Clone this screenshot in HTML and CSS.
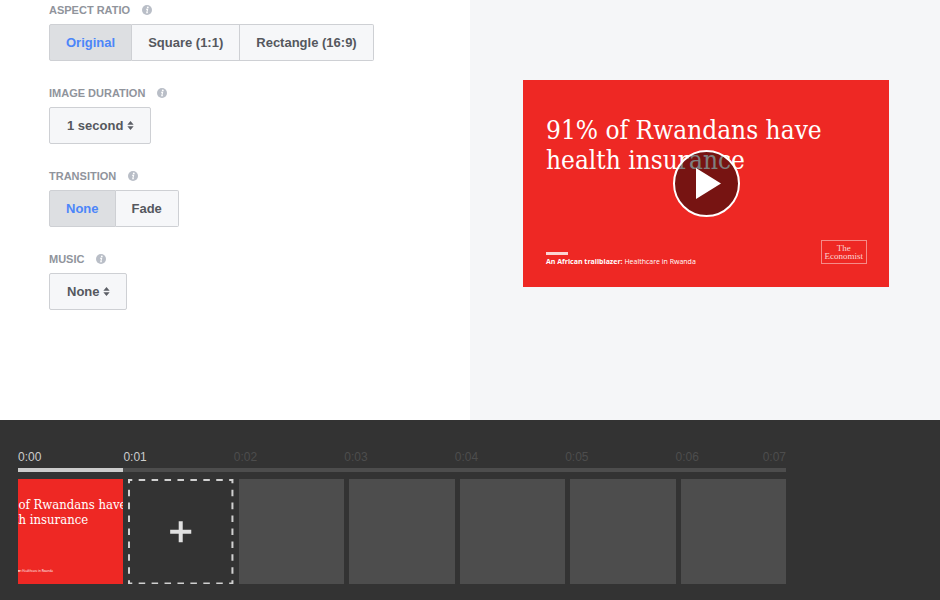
FILE: index.html
```html
<!DOCTYPE html>
<html lang="en">
<head>
<meta charset="utf-8">
<title>Slideshow editor</title>
<link rel="stylesheet" href="styles.css">
</head>
<body>
<svg class="defs" aria-hidden="true">
  <symbol id="info" viewBox="0 0 10 10"><circle cx="5" cy="5" r="5" fill="#b9bec7"/><circle cx="5.8" cy="2.4" r=".9" fill="#fff"/><path d="M4 4.300h1.600L4.800 7.600h1" fill="none" stroke="#fff" stroke-width="1.1"/></symbol>
  <symbol id="sort" viewBox="0 0 7 10"><path d="M3.500 0 7 4.300H0zM0 5.700h7L3.500 10z" fill="#5c5f66"/></symbol>
</svg>
<main class="editor">
  <form class="settings">
    <div class="field" role="group" aria-labelledby="l-ratio">
      <div class="label"><span id="l-ratio">ASPECT RATIO</span><svg class="info"><use href="#info"/></svg></div>
      <div class="segments">
        <button type="button" class="segment selected">Original</button>
        <button type="button" class="segment">Square (1:1)</button>
        <button type="button" class="segment">Rectangle (16:9)</button>
      </div>
    </div>
    <div class="field">
      <div class="label"><label for="duration">IMAGE DURATION</label><svg class="info"><use href="#info"/></svg></div>
      <div class="picker"><select id="duration"><option>1 second</option></select><svg class="sort"><use href="#sort"/></svg></div>
    </div>
    <div class="field" role="group" aria-labelledby="l-trans">
      <div class="label"><span id="l-trans">TRANSITION</span><svg class="info"><use href="#info"/></svg></div>
      <div class="segments">
        <button type="button" class="segment selected">None</button>
        <button type="button" class="segment">Fade</button>
      </div>
    </div>
    <div class="field">
      <div class="label"><label for="music">MUSIC</label><svg class="info"><use href="#info"/></svg></div>
      <div class="picker"><select id="music"><option>None</option></select><svg class="sort"><use href="#sort"/></svg></div>
    </div>
  </form>
  <section class="preview">
    <div class="slide">
      <div class="headline">91% of Rwandans have<br>health insurance</div>
      <div class="slide-foot">
        <div class="caption"><b>An African trailblazer:</b> Healthcare in Rwanda</div>
        <div class="logo"><div>The</div><div>Economist</div></div>
      </div>
      <button type="button" class="play" aria-label="Play"><svg viewBox="0 0 63 63"><path d="M21 16v31l25-15.500z" fill="#fff"/></svg></button>
    </div>
  </section>
</main>
<section class="timeline">
  <div class="track times">
    <div class="time on">0:00</div>
    <div class="time on">0:01</div>
    <div class="time">0:02</div>
    <div class="time">0:03</div>
    <div class="time">0:04</div>
    <div class="time">0:05</div>
    <div class="time">0:06<span>0:07</span></div>
  </div>
  <div class="track bar"><div class="filled"></div></div>
  <div class="track">
    <div class="tile thumb">
      <div class="mini">
        <div class="mini-headline">91% of Rwandans have<br>health insurance</div>
        <div class="mini-caption"><b>An African trailblazer:</b> Healthcare in Rwanda</div>
      </div>
    </div>
    <button type="button" class="tile add" aria-label="Add image">
      <svg viewBox="0 0 105 105" fill="none">
        <rect x="1" y="1" width="103" height="103" stroke="#d0d0d0" stroke-width="2" stroke-dasharray="6.500 6.375" stroke-dashoffset="3.250"/>
        <path d="M52.500 42v21M42 52.500h21" stroke="#e0e0e0" stroke-width="4"/>
      </svg>
    </button>
    <div class="tile"></div>
    <div class="tile"></div>
    <div class="tile"></div>
    <div class="tile"></div>
    <div class="tile"></div>
  </div>
</section>
</body>
</html>
```
FILE: styles.css
```css
* { box-sizing: border-box; }
body {
  margin: 0;
  min-height: 100vh;
  display: grid;
  grid-template-rows: 1fr auto;
  font-family: "Liberation Sans", Arial, sans-serif;
  background: #fff;
}
.defs { position: absolute; width: 0; height: 0; }
button, select { font: inherit; margin: 0; }

.editor { display: grid; grid-template-columns: 1fr 1fr; }
.settings {
  display: flex;
  flex-direction: column;
  gap: 24px;
  padding: 2px 49px 24px;
}
.field { display: flex; flex-direction: column; align-items: flex-start; gap: 6px; }
.label {
  display: flex;
  align-items: center;
  gap: 12px;
  font-size: 11px;
  font-weight: bold;
  line-height: 16px;
  color: #90949c;
}
.info { width: 10px; height: 10px; }
.segments { display: flex; }
.segment, .picker select {
  height: 37px;
  padding: 0 16px;
  border: 1px solid #ced0d4;
  background: #f6f7f9;
  color: #55585e;
  font-size: 13px;
  font-weight: bold;
  white-space: nowrap;
}
.segment { border-left-width: 0; }
.segment:first-child { border-left-width: 1px; border-radius: 2px 0 0 2px; }
.segment:last-child { border-radius: 0 2px 2px 0; }
.segment.selected { background: #dddfe2; color: #4c86f9; }
.picker { position: relative; }
.picker select { appearance: none; display: block; border-radius: 2px; padding: 0 26px 0 17px; }
.sort {
  position: absolute;
  right: 17px;
  top: 14px;
  width: 7px;
  height: 9px;
  pointer-events: none;
}

.preview { background: #f5f6f8; padding: 80px 51px 24px 53px; }
.slide {
  position: relative;
  aspect-ratio: 366 / 207;
  display: flex;
  flex-direction: column;
  justify-content: space-between;
  padding: 35px 22px 20px 23px;
  background: #ee2824;
  color: #fff;
}
.headline {
  font: 26px/30px "DejaVu Serif Condensed", "DejaVu Serif", serif;
  white-space: nowrap;
}
.slide-foot { display: flex; justify-content: space-between; align-items: flex-end; }
.caption { font: 7px/10px "Open Sans", sans-serif; white-space: nowrap; }
.caption::before {
  content: "";
  display: block;
  width: 22px;
  height: 3px;
  margin-bottom: 2px;
  background: #fbd5d3;
}
.logo {
  margin-bottom: 3px;
  border: 1px solid #f58b88;
  padding: 3px;
  color: #fbd5d3;
  font: 9px/8px "Liberation Serif", serif;
  text-align: center;
}
.play {
  position: absolute;
  inset: 0;
  margin: auto;
  width: 67px;
  height: 67px;
  padding: 0;
  border: 2px solid #fff;
  border-radius: 50%;
  background: rgba(0, 0, 0, .5);
}
.play svg { display: block; width: 100%; }

.timeline { background: #333; padding: 29px 18px 16px; }
.track {
  display: grid;
  grid-template-columns: repeat(7, 1fr);
  gap: 5px;
  max-width: 768px;
}
.times { font-size: 12px; line-height: 16px; color: #4d4d4d; }
.time { display: flex; justify-content: space-between; }
.time + .time { margin-left: -5px; }
.time.on { color: #ccc; }
.bar { height: 4px; margin: 3px 0 7px; background: #4d4d4d; }
.filled { background: #ccc; }
.tile { aspect-ratio: 1; background: #4d4d4d; }
.thumb {
  display: flex;
  justify-content: center;
  overflow: hidden;
  background: #ee2824;
  color: #fff;
}
.mini {
  flex: none;
  width: 186px;
  display: flex;
  flex-direction: column;
  justify-content: space-between;
  padding: 18px 11px 10px;
  white-space: nowrap;
}
.mini-headline { font: 13px/15px "DejaVu Serif Condensed", "DejaVu Serif", serif; }
.mini-caption { font: 3px/5px "Open Sans", sans-serif; }
.add { padding: 0; border: 0; background: #333; }
.add svg { display: block; width: 100%; }
```
